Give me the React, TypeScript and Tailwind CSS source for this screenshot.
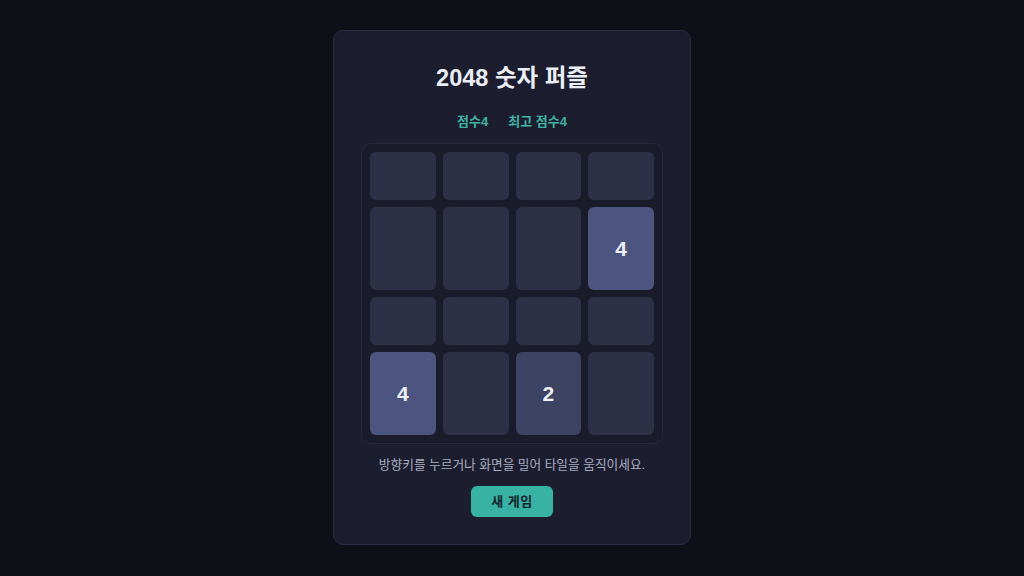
import React from "react";

const rows: { h: string; cells: (number | null)[] }[] = [
  { h: "h-[48px]", cells: [null, null, null, null] },
  { h: "h-[83px]", cells: [null, null, null, 4] },
  { h: "h-[48px]", cells: [null, null, null, null] },
  { h: "h-[83px]", cells: [4, null, 2, null] },
];

function Tile({ value }: { value: number | null }) {
  const bg =
    value === 4 ? "bg-[#4b5580]" : value === 2 ? "bg-[#3d4363]" : "bg-[#2e3047]";
  return (
    <div className={`flex-1 rounded-md ${bg} flex items-center justify-center`}>
      {value !== null && (
        <span className="text-[21px] font-bold text-[#eef0f8]">{value}</span>
      )}
    </div>
  );
}

export default function App() {
  return (
    <div
      className="min-h-screen w-full bg-[#0f1017] flex justify-center pt-[30px]"
      style={{ fontFamily: '"Liberation Sans", "Noto Sans CJK KR", sans-serif' }}
    >
      <div className="w-[358px] h-[515px] rounded-[10px] border border-[#2a2c40] bg-[#1c1e30] px-[27px] pt-[30px] flex flex-col items-center">
        <h1 className="text-[23.5px] font-bold text-[#eceef6] leading-[34px]">
          2048 숫자 퍼즐
        </h1>

        {/* score line */}
        <div className="mt-[18px] flex gap-[20px] text-[13px] font-bold text-[#3fb3a4] leading-[18px]">
          <span>점수4</span>
          <span>최고 점수4</span>
        </div>

        {/* board */}
        <div className="mt-[12px] w-[302px] rounded-[10px] border border-[#262840] bg-[#1a1c2c] p-[8px] flex flex-col gap-[7px]">
          {rows.map((row, i) => (
            <div key={i} className={`flex gap-[7px] ${row.h}`}>
              {row.cells.map((v, j) => (
                <Tile key={j} value={v} />
              ))}
            </div>
          ))}
        </div>

        <p className="mt-[12px] text-[12.7px] text-[#a9adc0] leading-[18px]">
          방향키를 누르거나 화면을 밀어 타일을 움직이세요.
        </p>

        <button className="mt-[12px] w-[82px] h-[31px] rounded-md bg-[#38b2a4] text-[13px] font-bold tracking-[0.5px] text-[#13242a]">
          새 게임
        </button>
      </div>
    </div>
  );
}
